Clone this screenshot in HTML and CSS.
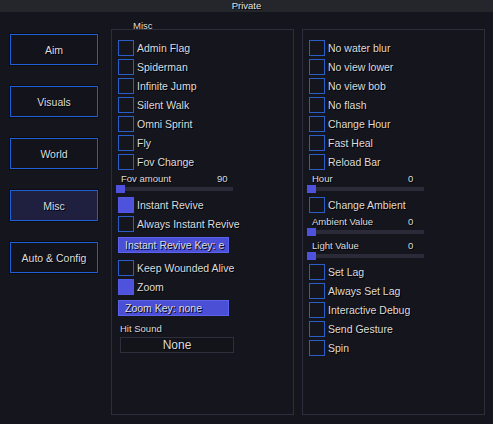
FILE: index.html
```html
<!DOCTYPE html>
<html>
<head>
<meta charset="utf-8">
<link rel="stylesheet" href="styles.css">
</head>
<body>
<div class="titlebar">Private</div>
<div class="main">
  <nav class="nav">
    <div class="navbtn">Aim</div>
    <div class="navbtn">Visuals</div>
    <div class="navbtn">World</div>
    <div class="navbtn active">Misc</div>
    <div class="navbtn">Auto &amp; Config</div>
  </nav>
  <section class="group group-left">
    <div class="group-label">Misc</div>
    <div class="panel">
      <div class="row"><span class="box"></span><span>Admin Flag</span></div>
      <div class="row"><span class="box"></span><span>Spiderman</span></div>
      <div class="row"><span class="box"></span><span>Infinite Jump</span></div>
      <div class="row"><span class="box"></span><span>Silent Walk</span></div>
      <div class="row"><span class="box"></span><span>Omni Sprint</span></div>
      <div class="row"><span class="box"></span><span>Fly</span></div>
      <div class="row"><span class="box"></span><span>Fov Change</span></div>
      <div class="slider">
        <div class="slider-label"><span>Fov amount</span><span>90</span></div>
        <div class="track"><span class="handle"></span></div>
      </div>
      <div class="row"><span class="box on"></span><span>Instant Revive</span></div>
      <div class="row"><span class="box"></span><span>Always Instant Revive</span></div>
      <div class="keybtn">Instant Revive Key: e</div>
      <div class="row"><span class="box"></span><span>Keep Wounded Alive</span></div>
      <div class="row"><span class="box on"></span><span>Zoom</span></div>
      <div class="keybtn">Zoom Key: none</div>
      <div class="small-label">Hit Sound</div>
      <div class="combo">None</div>
    </div>
  </section>
  <section class="group group-right">
    <div class="group-label"></div>
    <div class="panel">
      <div class="row"><span class="box"></span><span>No water blur</span></div>
      <div class="row"><span class="box"></span><span>No view lower</span></div>
      <div class="row"><span class="box"></span><span>No view bob</span></div>
      <div class="row"><span class="box"></span><span>No flash</span></div>
      <div class="row"><span class="box"></span><span>Change Hour</span></div>
      <div class="row"><span class="box"></span><span>Fast Heal</span></div>
      <div class="row"><span class="box"></span><span>Reload Bar</span></div>
      <div class="slider">
        <div class="slider-label"><span>Hour</span><span>0</span></div>
        <div class="track"><span class="handle"></span></div>
      </div>
      <div class="row"><span class="box"></span><span>Change Ambient</span></div>
      <div class="slider">
        <div class="slider-label"><span>Ambient Value</span><span>0</span></div>
        <div class="track"><span class="handle"></span></div>
      </div>
      <div class="slider">
        <div class="slider-label"><span>Light Value</span><span>0</span></div>
        <div class="track"><span class="handle"></span></div>
      </div>
      <div class="row"><span class="box"></span><span>Set Lag</span></div>
      <div class="row"><span class="box"></span><span>Always Set Lag</span></div>
      <div class="row"><span class="box"></span><span>Interactive Debug</span></div>
      <div class="row"><span class="box"></span><span>Send Gesture</span></div>
      <div class="row"><span class="box"></span><span>Spin</span></div>
    </div>
  </section>
</div>
</body>
</html>
```

FILE: styles.css
```css
* { box-sizing: border-box; }

html, body {
  margin: 0;
  padding: 0;
  background: #15151e;
  height: 100%;
}

body {
  font-family: "Liberation Sans", Arial, sans-serif;
  color: #dcdcdc;
  font-size: 10.5px;
  text-shadow: 1px 1px 0 #000;
  overflow: hidden;
}

.titlebar {
  height: 12px;
  line-height: 12px;
  background: #25252c;
  text-align: center;
  font-size: 9.5px;
  color: #e0e0e0;
}

.main {
  display: flex;
  padding-left: 10px;
}

.nav {
  width: 88px;
  padding-top: 22px;
  display: flex;
  flex-direction: column;
  gap: 21px;
}

.navbtn {
  height: 31px;
  border: 1px solid #1f5fd4;
  background: #13131b;
  display: flex;
  align-items: center;
  justify-content: center;
  box-shadow: 0 0 0 1px #0c0c12;
}

.navbtn.active {
  background: #1f1f40;
}

.group {
  width: 183px;
  display: flex;
  flex-direction: column;
}

.group-left { margin-left: 13px; }
.group-right { margin-left: 8px; }

.group-label {
  height: 17px;
  padding-top: 9px;
  padding-left: 22px;
  line-height: 10px;
  font-size: 9.5px;
}

.panel {
  height: 386px;
  border: 1px solid #2d2d3b;
  background: #15151e;
  padding: 10px 6px 0 6px;
  display: flex;
  flex-direction: column;
  gap: 3px;
}

.row {
  height: 16px;
  display: flex;
  align-items: center;
  gap: 3px;
  white-space: nowrap;
}

.box {
  width: 16px;
  height: 16px;
  flex: none;
  border: 1px solid #2a5ec6;
  background: #15151e;
}

.box.on {
  background: #4e52dc;
  border-color: #5358e0;
}

.slider {
  margin: 1px 0 1px -2px;
  width: 117px;
}

.slider-label {
  display: grid;
  grid-template-columns: 96px auto;
  height: 10px;
  line-height: 10px;
  font-size: 9.5px;
  padding-left: 5px;
}

.track {
  height: 9px;
  display: flex;
  align-items: center;
  background: linear-gradient(#2a2a38, #2a2a38) no-repeat 0 2.5px / 100% 4px;
}

.handle {
  width: 9px;
  height: 8px;
  background: #4e52dc;
}

.keybtn {
  width: 111px;
  height: 16px;
  margin: 2px 0 4px;
  line-height: 14px;
  padding-left: 6px;
  background: #4a4fd6;
  border: 1px solid #5b62ec;
  white-space: nowrap;
}

.small-label {
  font-size: 9.5px;
  line-height: 10px;
  height: 10px;
  margin-top: 1px;
  padding-left: 2px;
}

.combo {
  width: 114px;
  height: 16px;
  margin-left: 2px;
  border: 1px solid #2e2e3c;
  background: #13131a;
  text-align: center;
  font-size: 12px;
  line-height: 14px;
}
```
